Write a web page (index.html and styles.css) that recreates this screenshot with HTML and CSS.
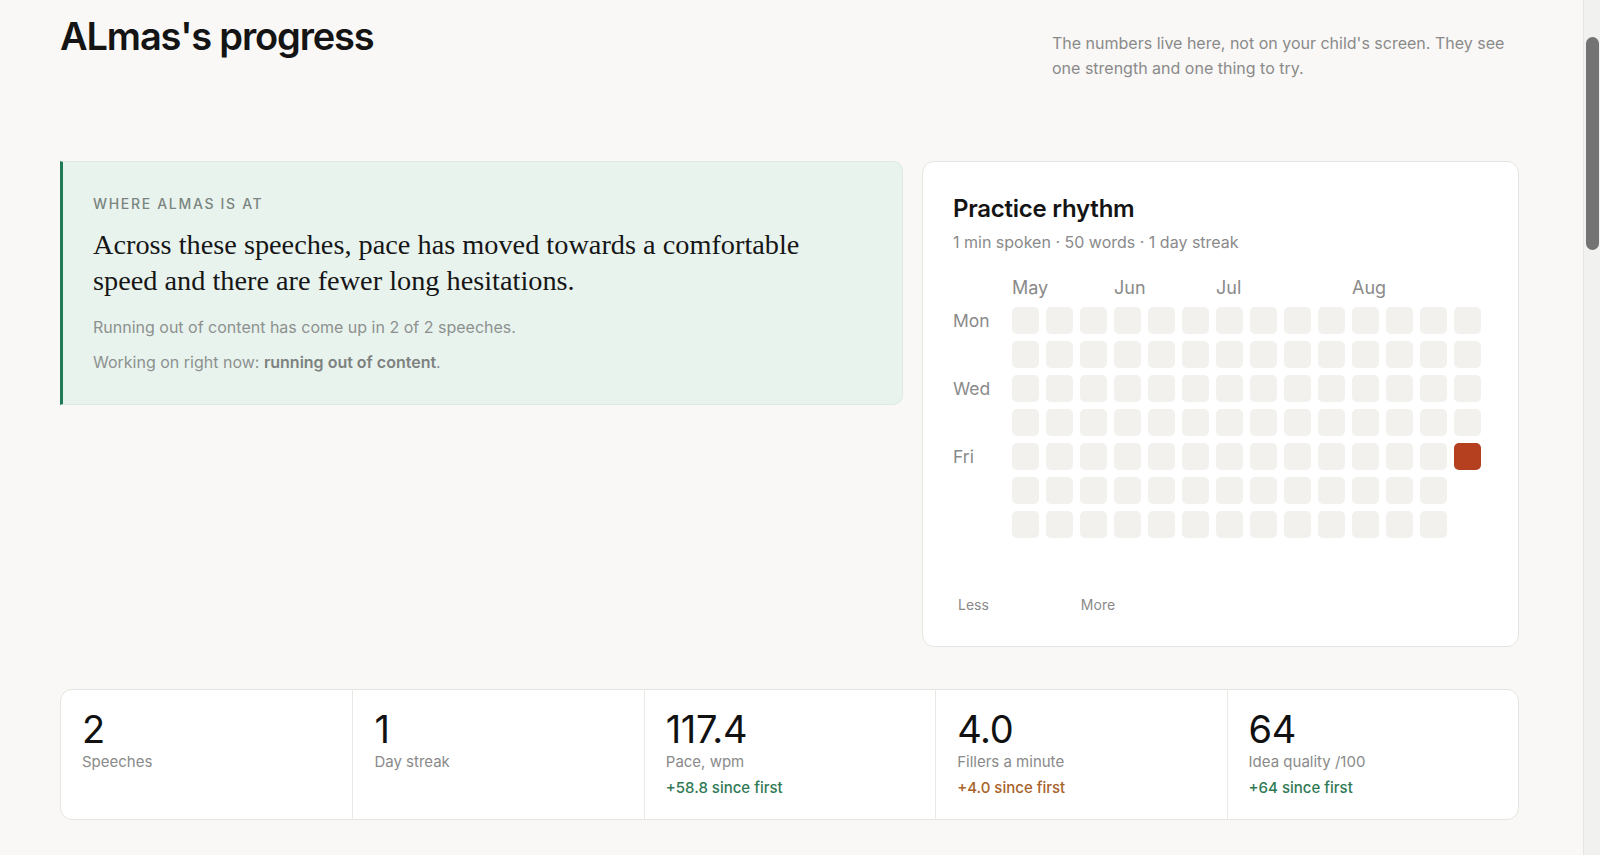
FILE: index.html
```html
<!DOCTYPE html>
<html lang="en">
<head>
    <meta charset="UTF-8">
    <meta name="viewport" content="width=device-width, initial-scale=1.0">
    <title>ALmas's progress</title>
    <link rel="stylesheet" href="styles.css">
</head>
<body>
    <div class="page">
        <!-- Header -->
        <header class="page-header">
            <h1>ALmas's progress</h1>
            <p class="page-note">The numbers live here, not on your child's screen. They see one strength and one thing to try.</p>
        </header>

        <div class="top-grid">
            <!-- Where they are -->
            <section class="insight">
                <div class="insight-label">Where Almas is at</div>
                <p class="insight-text">Across these speeches, pace has moved towards a comfortable speed and there are fewer long hesitations.</p>
                <p class="insight-meta">Running out of content has come up in 2 of 2 speeches.</p>
                <p class="insight-meta">Working on right now: <strong>running out of content</strong>.</p>
            </section>

            <!-- Practice rhythm -->
            <section class="card rhythm">
                <h2>Practice rhythm</h2>
                <p class="rhythm-sub">1 min spoken · 50 words · 1 day streak</p>

                <div class="heatmap">
                    <div class="months">
                        <span>May</span><span></span><span></span>
                        <span>Jun</span><span></span><span></span>
                        <span>Jul</span><span></span><span></span><span></span>
                        <span>Aug</span><span></span><span></span><span></span>
                    </div>
                    <div class="heatmap-body">
                        <div class="days">
                            <span>Mon</span><span></span><span>Wed</span><span></span><span>Fri</span><span></span><span></span>
                        </div>
                        <div class="cells">
                            <div class="cell"></div><div class="cell"></div><div class="cell"></div><div class="cell"></div><div class="cell"></div><div class="cell"></div><div class="cell"></div>
                            <div class="cell"></div><div class="cell"></div><div class="cell"></div><div class="cell"></div><div class="cell"></div><div class="cell"></div><div class="cell"></div>
                            <div class="cell"></div><div class="cell"></div><div class="cell"></div><div class="cell"></div><div class="cell"></div><div class="cell"></div><div class="cell"></div>
                            <div class="cell"></div><div class="cell"></div><div class="cell"></div><div class="cell"></div><div class="cell"></div><div class="cell"></div><div class="cell"></div>
                            <div class="cell"></div><div class="cell"></div><div class="cell"></div><div class="cell"></div><div class="cell"></div><div class="cell"></div><div class="cell"></div>
                            <div class="cell"></div><div class="cell"></div><div class="cell"></div><div class="cell"></div><div class="cell"></div><div class="cell"></div><div class="cell"></div>
                            <div class="cell"></div><div class="cell"></div><div class="cell"></div><div class="cell"></div><div class="cell"></div><div class="cell"></div><div class="cell"></div>
                            <div class="cell"></div><div class="cell"></div><div class="cell"></div><div class="cell"></div><div class="cell"></div><div class="cell"></div><div class="cell"></div>
                            <div class="cell"></div><div class="cell"></div><div class="cell"></div><div class="cell"></div><div class="cell"></div><div class="cell"></div><div class="cell"></div>
                            <div class="cell"></div><div class="cell"></div><div class="cell"></div><div class="cell"></div><div class="cell"></div><div class="cell"></div><div class="cell"></div>
                            <div class="cell"></div><div class="cell"></div><div class="cell"></div><div class="cell"></div><div class="cell"></div><div class="cell"></div><div class="cell"></div>
                            <div class="cell"></div><div class="cell"></div><div class="cell"></div><div class="cell"></div><div class="cell"></div><div class="cell"></div><div class="cell"></div>
                            <div class="cell"></div><div class="cell"></div><div class="cell"></div><div class="cell"></div><div class="cell"></div><div class="cell"></div><div class="cell"></div>
                            <div class="cell"></div><div class="cell"></div><div class="cell"></div><div class="cell"></div><div class="cell level-4"></div>
                        </div>
                    </div>
                </div>

                <div class="legend">
                    <span>Less</span>
                    <span class="legend-swatches">
                        <i></i><i></i><i></i><i></i><i></i>
                    </span>
                    <span>More</span>
                </div>
            </section>
        </div>

        <!-- Stats -->
        <section class="stats">
            <div class="stat">
                <div class="stat-value">2</div>
                <div class="stat-label">Speeches</div>
            </div>
            <div class="stat">
                <div class="stat-value">1</div>
                <div class="stat-label">Day streak</div>
            </div>
            <div class="stat">
                <div class="stat-value">117.4</div>
                <div class="stat-label">Pace, wpm</div>
                <div class="stat-delta good">+58.8 since first</div>
            </div>
            <div class="stat">
                <div class="stat-value">4.0</div>
                <div class="stat-label">Fillers a minute</div>
                <div class="stat-delta bad">+4.0 since first</div>
            </div>
            <div class="stat">
                <div class="stat-value">64</div>
                <div class="stat-label">Idea quality /100</div>
                <div class="stat-delta good">+64 since first</div>
            </div>
        </section>
    </div>

    <!-- window scrollbar as it shows in the capture -->
    <div class="scrollbar"><div class="scrollbar-thumb"></div></div>
</body>
</html>
```

FILE: styles.css
```css
:root {
    --bg: #f9f8f6;
    --card: #ffffff;
    --border: #e7e5e1;
    --text: #141414;
    --muted: #8a8a8a;
    --green: #1f7a55;
    --green-bg: #e9f3ee;
    --green-text: #2f7a55;
    --orange-text: #a8622a;
    --cell: #f3f1ee;
    --hot: #b5401f;
    --radius: 12px;
}

* {
    margin: 0;
    padding: 0;
    box-sizing: border-box;
}

body {
    font-family: 'Inter', 'Roboto', 'Helvetica Neue', Arial, sans-serif;
    color: var(--text);
    background-color: var(--bg);
}

.page {
    width: 1459px;
    margin: 0 60px;
}

.page-header {
    display: flex;
    justify-content: space-between;
    align-items: flex-start;
    padding-top: 12px;
    margin-bottom: 80px;
}

h1 {
    font-size: 38px;
    font-weight: 600;
    line-height: 48px;
    letter-spacing: -0.03em;
}

.page-note {
    width: 467px;
    margin-top: 19px;
    font-size: 16px;
    line-height: 25px;
    color: var(--muted);
}

.top-grid {
    display: grid;
    grid-template-columns: 843px 1fr;
    gap: 19px;
    align-items: start;
    margin-bottom: 42px;
}

/* Insight panel */
.insight {
    background-color: var(--green-bg);
    border: 1px solid #dce9e2;
    border-left: 3px solid var(--green);
    border-radius: 0 10px 10px 0;
    padding: 33px 30px 30px 30px;
}

.insight-label {
    font-size: 14px;
    line-height: 18px;
    font-weight: 500;
    letter-spacing: 0.12em;
    text-transform: uppercase;
    color: #7b8580;
    margin-bottom: 14px;
}

.insight-text {
    max-width: 730px;
    font-family: 'Liberation Serif', 'DejaVu Serif', serif;
    font-size: 28.3px;
    line-height: 36px;
    color: #161616;
    margin-bottom: 16px;
}

.insight-meta {
    font-size: 16px;
    line-height: 24px;
    color: #8c918e;
    margin-bottom: 11px;
}

.insight-meta:last-child {
    margin-bottom: 0;
}

.insight-meta strong {
    font-weight: 600;
    color: #7d827f;
}

/* Practice rhythm */
.card {
    background-color: var(--card);
    border: 1px solid var(--border);
    border-radius: var(--radius);
}

.rhythm {
    padding: 32px 30px 31px 30px;
}

.rhythm h2 {
    font-size: 24px;
    line-height: 30px;
    font-weight: 600;
    letter-spacing: -0.01em;
}

.rhythm-sub {
    margin-top: 7px;
    font-size: 16px;
    line-height: 22px;
    color: var(--muted);
}

.heatmap {
    margin-top: 24px;
}

.months {
    display: grid;
    grid-template-columns: repeat(14, 27px);
    column-gap: 7px;
    margin-left: 59px;
    margin-bottom: 8px;
    font-size: 18px;
    line-height: 22px;
    color: var(--muted);
    white-space: nowrap;
}

.heatmap-body {
    display: flex;
}

.days {
    width: 59px;
    display: grid;
    grid-template-rows: repeat(7, 27px);
    row-gap: 7px;
    font-size: 17.5px;
    color: var(--muted);
}

.days span {
    display: flex;
    align-items: center;
}

.cells {
    display: grid;
    grid-template-rows: repeat(7, 27px);
    grid-auto-flow: column;
    grid-auto-columns: 27px;
    gap: 7px;
}

.cell {
    background-color: var(--cell);
    border-radius: 5px;
}

.cell.level-4 {
    background-color: var(--hot);
}

.legend {
    display: flex;
    align-items: center;
    gap: 10px;
    margin-top: 57px;
    padding-left: 5px;
    font-size: 14px;
    line-height: 20px;
    color: var(--muted);
}

.legend-swatches {
    display: flex;
    gap: 3px;
}

.legend-swatches i {
    width: 12px;
    height: 12px;
}

/* Stats strip */
.stats {
    display: grid;
    grid-template-columns: repeat(5, 1fr);
    background-color: var(--card);
    border: 1px solid var(--border);
    border-radius: var(--radius);
}

.stat {
    padding: 17px 21px 20px 21px;
    border-left: 1px solid #ebe9e5;
}

.stat:first-child {
    border-left: none;
}

.stat-value {
    font-size: 38px;
    line-height: 44px;
    font-weight: 400;
    letter-spacing: -0.01em;
    color: #111111;
}

.stat-label {
    font-size: 15px;
    line-height: 22px;
    color: var(--muted);
}

.stat-delta {
    margin-top: 4px;
    font-size: 15px;
    line-height: 22px;
    font-weight: 500;
}

.stat-delta.good {
    color: var(--green-text);
}

.stat-delta.bad {
    color: var(--orange-text);
}

/* Fake window scrollbar */
.scrollbar {
    position: fixed;
    top: 0;
    right: 0;
    bottom: 0;
    width: 17px;
    background-color: #f1f1f0;
    border-left: 1px solid #e6e5e3;
}

.scrollbar-thumb {
    position: absolute;
    top: 37px;
    left: 2px;
    width: 13px;
    height: 213px;
    border-radius: 7px;
    background-color: #737373;
}
```
